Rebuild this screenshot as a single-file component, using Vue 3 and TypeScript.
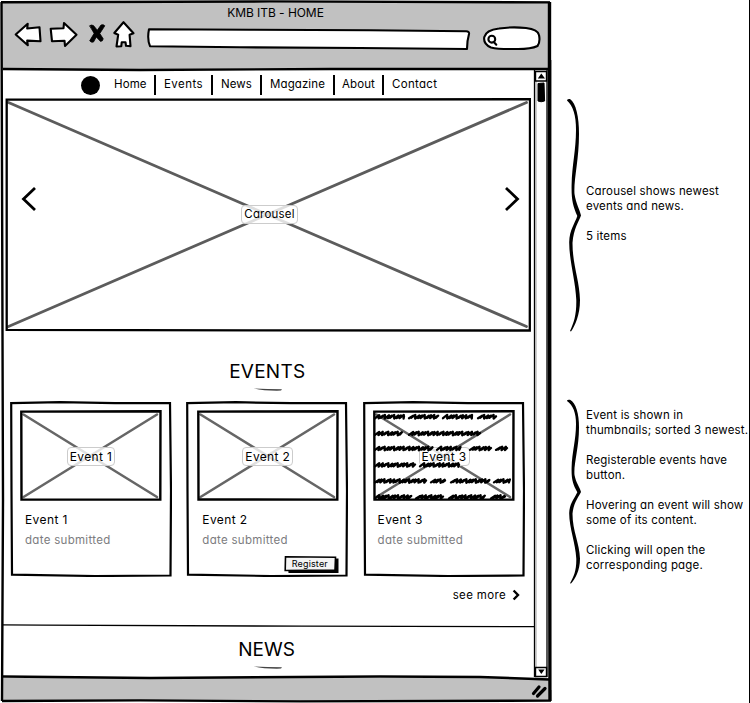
<script setup lang="ts">
interface EventCard {
  title: string
  date: string
  registerable: boolean
  hovered: boolean
}

const navItems: string[] = ['Home', 'Events', 'News', 'Magazine', 'About', 'Contact']

const events: EventCard[] = [
  { title: 'Event 1', date: 'date submitted', registerable: false, hovered: false },
  { title: 'Event 2', date: 'date submitted', registerable: true, hovered: false },
  { title: 'Event 3', date: 'date submitted', registerable: false, hovered: true },
]

const carouselNotes: string[][] = [['Carousel shows newest', 'events and news.'], ['5 items']]

const eventNotes: string[][] = [
  ['Event is shown in', 'thumbnails; sorted 3 newest.'],
  ['Registerable events have', 'button.'],
  ['Hovering an event will show', 'some of its content.'],
  ['Clicking will open the', 'corresponding page.'],
]

// Scribbled words of the hover preview: line height, then [start, end] of each word.
const scribbleRows: { y: number; words: number[][] }[] = [
  { y: 6.8, words: [[2, 31], [36, 64], [70, 98], [105, 123]] },
  { y: 23.5, words: [[2, 28], [36, 107]] },
  { y: 38.5, words: [[2, 59], [64, 87], [97, 118], [123, 134]] },
  { y: 55, words: [[2, 42], [47, 86]] },
  { y: 71, words: [[2, 53], [58, 72], [78, 116], [121, 136]] },
  { y: 87, words: [[2, 37], [43, 70], [76, 111], [118, 132]] },
]

function scribble(y: number, from: number, to: number): string {
  let d = `M${from} ${y + 1.4}`
  let i = 0
  for (let x = from; x < to - 3; i++) {
    const wobble = Math.sin(i * 2.3 + from + y)
    const step = 3.1 + wobble * 1.1
    d += `L${(x + 4.2).toFixed(1)} ${(y - 1.5 - wobble * 0.4).toFixed(1)}L${(x + step).toFixed(1)} ${(y + 1.4 + wobble * 0.4).toFixed(1)}`
    x += step
  }
  return d + `L${to} ${y - 0.5}`
}

const scribblePath: string = scribbleRows
  .map((row) => row.words.map(([a, b]) => scribble(row.y, a, b)).join(''))
  .join('')

const bracePath =
  'M567 100.5Q567 98.5 570 99C576 103 579 117 579 134C579 160 573.5 180 574.5 194C576 204 580 210 581 215.5C579 221 573.5 229 572.5 243C572.5 265 579.5 280 580 300C580 315 575 326 571 331.5L570 331C574 322 576.5 315 576.3 300C575.5 280 569 260 569.2 242C569.5 230 575 223 577.3 216C573 206 571.3 200 571.6 185C572 165 576 150 576 130C576 115 573 106 567 100.5Z'
</script>

<template>
  <div class="page">
    <section class="browser">
      <svg class="frame" viewBox="0 0 552 703" fill="none" stroke="#000">
        <path d="M1.5 2L3 500L2 701" stroke-width="2.4" />
        <path d="M1 2.2L270 1.4L550 2.4" stroke-width="2.4" />
        <path d="M549.5 2L549.3 300L550 701" stroke-width="3.4" />
        <path d="M551.6 60V690" stroke="#777" stroke-width=".8" />
        <path d="M2 701L140 700.4L300 701.4L551 700.6" stroke-width="2.4" />
        <path d="M3 69L140 70L330 69L551 69" stroke-width="2.4" />
        <path d="M3 676.5L150 678L380 676.5L480 677L549 679.5" stroke-width="2.5" />
      </svg>

      <header class="chrome">
        <div class="window-title">KMB ITB - HOME</div>
        <div class="toolbar">
          <svg class="ico-back" viewBox="14 20 30 30">
            <path d="M15.7 34.5L27.7 23.8L27.2 28.5L39.5 27.2L40.5 41.3L27.2 40.6L27.8 45.3Z" />
          </svg>
          <svg class="ico-forward" viewBox="48 20 32 30">
            <path d="M76.5 34.8L64 23L63.5 28.2L50.7 28.7L52 41.2L64.5 40.7L65 46Z" />
          </svg>
          <svg class="ico-stop" viewBox="87 20 20 30">
            <path d="M89.8 25.6Q91.5 24.4 93.5 25.6L97.3 30.2L101 25Q103.5 24 104.8 25.8L99.8 33.5L103.2 38.8Q103 41.3 100.5 41.4L96.3 37L93.5 42Q91 42.8 89.7 40.8L94 33.6Z" />
          </svg>
          <svg class="ico-home" viewBox="111 18 26 32">
            <path d="M123.5 22.2L114.3 33L118.2 34.7L116.5 46.5L121.3 46.2L121.7 42.3L125.5 42.2L126 45.8L130.5 46.2L129.6 34.8L133.5 33.3Z" />
          </svg>
          <svg class="address" viewBox="145 24 328 28">
            <path d="M149 29.3L250 29.7L370 30.2L466 31.3Q469.5 31.2 469 34Q467 41 467 49L360 48L240 47.3L150 46.2Q147 39 149 29.3Z" />
          </svg>
          <svg class="search" viewBox="481 24 62 30">
            <path d="M499 28.5Q512 26.5 526 28Q538 29.5 539 35Q540.5 42 537.5 46Q530 49.5 514 49Q498 49.3 491 47.5Q483 44 484.3 37Q486 30 499 28.5Z" />
            <circle cx="491.8" cy="39.2" r="3.4" />
            <path d="M493.8 42L496.3 44.7" />
          </svg>
        </div>
      </header>

      <div class="viewport">
        <main class="content">
          <nav class="nav">
            <span class="logo"></span>
            <span v-for="item in navItems" :key="item" class="nav-item" :class="item.toLowerCase()">{{ item }}</span>
          </nav>

          <section class="carousel">
            <svg class="sketch" viewBox="0 0 526 234" fill="none">
              <path d="M3.5 4.5L521.5 228.5M521.5 4.5L3.5 228.5" stroke="#5c5c5c" stroke-width="2.8" stroke-linecap="round" />
              <path d="M1.7 1.7L240 1.6L525 1.2L524.8 232.5L260 232.3L1.7 231.8Z" stroke="#000" stroke-width="2.3" />
            </svg>
            <svg class="arrow" viewBox="0 0 16 26"><path d="M14 2L2.5 13L14 24" /></svg>
            <span class="tag">Carousel</span>
            <svg class="arrow" viewBox="0 0 16 26"><path d="M2 2L13.5 13L2 24" /></svg>
          </section>

          <h2 class="heading events-heading">EVENTS</h2>
          <svg class="stroke" viewBox="0 0 30 4"><path d="M1 .4Q14 .9 29 1.2L28 2.6Q12 3 1 .4Z" /></svg>

          <section class="cards">
            <article v-for="event in events" :key="event.title" class="card">
              <svg class="sketch" viewBox="0 0 162 176" fill="none" stroke="#000" stroke-width="2.2">
                <path d="M1.2 2.2L50 1.2L105 2.2L160 2L161 90L160.5 174.5L85 175L2 173.7L1.5 90Z" />
              </svg>
              <div class="thumb">
                <svg class="sketch" viewBox="0 0 142 91" fill="none">
                  <path d="M3.5 4.5L137 87M137 4.5L3.5 87" stroke="#666" stroke-width="2.6" stroke-linecap="round" />
                  <path d="M1.3 1.6L70 1.5L140.5 1.2L140.3 89.6L1.5 89.5Z" stroke="#000" stroke-width="2.4" />
                </svg>
                <span class="tag">{{ event.title }}</span>
                <svg v-if="event.hovered" class="sketch scribbles" viewBox="0 0 142 91">
                  <path :d="scribblePath" />
                </svg>
              </div>
              <h3 class="card-title">{{ event.title }}</h3>
              <p class="card-date">{{ event.date }}</p>
              <button v-if="event.registerable" class="register" type="button">
                <svg class="sketch" viewBox="0 0 56 20">
                  <path d="M3.5 4L54.5 3.5L54.5 18L4.5 18Z" />
                  <path d="M1.5 1.7L51.5 2.2L51 15L1.2 15.5Z" fill="#f4f4f4" stroke="#000" stroke-width="1.6" />
                </svg>
                <span>Register</span>
              </button>
            </article>
          </section>

          <div class="more">
            <span>see more</span>
            <svg viewBox="0 0 8 12"><path d="M1.6 1.5L6 6L1.6 10.5" /></svg>
          </div>

          <svg class="rule" viewBox="0 0 534 4"><path d="M0 .8L40 1.2L300 2.2L533 2.7" /></svg>

          <h2 class="heading news-heading">NEWS</h2>
          <svg class="stroke" viewBox="0 0 30 4"><path d="M1 .4Q14 .9 29 1.2L28 2.6Q12 3 1 .4Z" /></svg>
        </main>

        <svg class="scrollbar" viewBox="533 70 16 608" fill="none" stroke="#000">
          <path d="M534.5 70V677" stroke-width="1.3" />
          <path d="M536 81V667" stroke="#888" stroke-width=".8" />
          <path d="M547 70V677" stroke-width="1.3" />
          <path d="M535.5 71.5H546.5V81H535.5ZM535.5 667.5H546.5V676.5H535.5Z" stroke-width="1.4" />
          <path d="M541.3 73.5L545 78.5H537.8ZM541.3 674L544.6 669.5H538.2Z" fill="#000" stroke="none" />
          <path d="M538 83.5L544 83L544.6 101Q541 102.5 538 101Z" fill="#000" />
        </svg>
      </div>

      <footer class="status">
        <svg viewBox="530 682 18 18"><path d="M533.5 693.5L539 687M537.5 696L545 688.5" /></svg>
      </footer>
    </section>

    <aside class="notes">
      <div class="note note-carousel">
        <svg class="brace" viewBox="566 98 16 234" preserveAspectRatio="none"><path :d="bracePath" /></svg>
        <div class="note-text">
          <p v-for="(para, i) in carouselNotes" :key="i">
            <span v-for="line in para" :key="line">{{ line }}</span>
          </p>
        </div>
      </div>
      <div class="note note-events">
        <svg class="brace" viewBox="566 98 16 234" preserveAspectRatio="none"><path :d="bracePath" /></svg>
        <div class="note-text">
          <p v-for="(para, i) in eventNotes" :key="i">
            <span v-for="line in para" :key="line">{{ line }}</span>
          </p>
        </div>
      </div>
    </aside>
  </div>
</template>

<style>
body {
  margin: 0;
  background: #fff;
}
</style>

<style scoped>
.page {
  display: flex;
  width: 750px;
  height: 703px;
  overflow: hidden;
  box-sizing: border-box;
  border-right: 1px solid #000;
  font-family: Inter, "Liberation Sans", sans-serif;
  font-feature-settings: "cv11";
  font-size: 11.5px;
  line-height: 15px;
  letter-spacing: 0.17px;
  color: #000;
}
svg {
  display: block;
  flex: none;
}
h2,
h3,
p {
  margin: 0;
  font-weight: 400;
}
.browser {
  position: relative;
  display: flex;
  flex-direction: column;
  width: 552px;
  flex: none;
}
.frame {
  position: absolute;
  inset: 0;
  width: 552px;
  height: 703px;
  z-index: 2;
  pointer-events: none;
}
.chrome {
  height: 69px;
  margin: 1px 2px 0 1px;
  background: #c1c1c1;
}
.window-title {
  padding-top: 3.5px;
  text-align: center;
  font-size: 12px;
  line-height: 16px;
  letter-spacing: -0.05px;
}
.toolbar {
  display: flex;
  margin: -2.5px 0 0 13px;
}
.toolbar svg {
  fill: #fff;
  stroke: #000;
  stroke-width: 2.1;
  stroke-linejoin: round;
  stroke-linecap: round;
}
.ico-back { width: 30px; height: 30px; margin-top: 2px; }
.ico-forward { width: 32px; height: 30px; margin: 2px 0 0 4px; }
.toolbar .ico-stop { width: 20px; height: 30px; margin: 2px 0 0 7px; stroke-width: 0.8; fill: #000; }
.ico-home { width: 26px; height: 32px; margin-left: 4px; }
.address { width: 328px; height: 28px; margin: 6px 0 0 8px; }
.search { width: 62px; height: 30px; margin: 6px 0 0 8px; }

.viewport {
  display: flex;
  height: 608px;
}
.content {
  width: 533px;
  flex: none;
}
.scrollbar {
  width: 16px;
  height: 608px;
}
.nav {
  display: flex;
  align-items: center;
  height: 20px;
  padding: 5px 0 3px 81px;
}
.logo {
  width: 19px;
  height: 19px;
  margin-right: 14px;
  border-radius: 50%;
  background: #000;
}
.nav-item {
  box-sizing: border-box;
  height: 20px;
  line-height: 19px;
  letter-spacing: 0.1px;
  white-space: nowrap;
}
.nav-item + .nav-item {
  border-left: 2px solid #000;
  padding-left: 8px;
}
.home { width: 40px; }
.events { width: 57px; letter-spacing: 0.45px; }
.news { width: 49px; }
.magazine { width: 73px; }
.nav-item.about { width: 49px; padding-left: 7px; }
.contact { letter-spacing: 0.3px; }

.sketch {
  position: absolute;
  inset: 0;
  width: 100%;
  height: 100%;
}
.carousel {
  position: relative;
  display: flex;
  justify-content: space-between;
  width: 526px;
  height: 234px;
  box-sizing: border-box;
  margin-left: 5px;
  padding: 0 11.5px 0 15.5px;
}
.arrow {
  width: 16px;
  height: 26px;
  margin-top: 87.5px;
  fill: none;
  stroke: #000;
  stroke-width: 2.8;
}
.tag {
  position: relative;
  box-sizing: border-box;
  height: 19px;
  padding: 0 2px;
  border: 1px solid #ccc;
  border-radius: 4px;
  background: rgba(255, 255, 255, 0.8);
  line-height: 16px;
  white-space: nowrap;
}
.carousel .tag {
  margin: 107px 1px 0 0;
  padding: 0 2.5px;
  letter-spacing: 0.2px;
}
.heading {
  width: 100%;
  text-align: center;
  font-size: 19px;
  line-height: 24px;
  letter-spacing: 0.25px;
}
.events-heading { margin-top: 28px; text-indent: 1.5px; }
.news-heading { margin-top: 10px; letter-spacing: 0; }
.stroke {
  width: 30px;
  height: 4px;
  margin: 4px 0 0 253px;
  fill: #444;
}
.cards {
  display: flex;
  gap: 14.3px;
  margin: 9px 0 0 10px;
}
.card {
  position: relative;
  width: 162px;
  height: 176px;
}
.thumb {
  position: relative;
  display: flex;
  align-items: center;
  justify-content: center;
  width: 142px;
  height: 91px;
  margin: 9px 0 0 10.5px;
}
.card:first-child .thumb {
  margin-left: 10px;
}
.thumb .tag {
  margin-top: 1px;
  font-size: 12px;
  line-height: 17px;
  letter-spacing: 0.35px;
}
.scribbles {
  fill: none;
  stroke: #000;
  stroke-width: 2.3;
  stroke-linejoin: round;
  stroke-linecap: round;
}
.card-title {
  position: relative;
  margin: 10px 0 0 15px;
  font-size: 12px;
  line-height: 18px;
  letter-spacing: 0.4px;
}
.card-date {
  position: relative;
  margin: 2px 0 0 15px;
  line-height: 18px;
  letter-spacing: 0.3px;
  color: #7c7c80;
}
.card:nth-child(2) .card-title,
.card:nth-child(2) .card-date {
  margin-left: 16px;
}
.register {
  position: relative;
  display: block;
  width: 56px;
  height: 20px;
  margin: 6px 0 0 98px;
  padding: 0 5px 3px 0;
  border: 0;
  background: none;
  font: inherit;
  font-size: 9px;
  line-height: 16px;
  letter-spacing: 0.15px;
  color: #000;
}
.register span {
  position: relative;
}
.more {
  display: flex;
  align-items: center;
  justify-content: flex-end;
  gap: 6px;
  margin: 10px 13px 0 0;
  line-height: 16px;
  letter-spacing: 0.35px;
}
.more svg {
  width: 8px;
  height: 12px;
  fill: none;
  stroke: #000;
  stroke-width: 2.4;
}
.rule {
  width: 534px;
  height: 4px;
  margin: 21px 0 0 2px;
  fill: none;
  stroke: #000;
  stroke-width: 1.3;
}
.status {
  display: flex;
  justify-content: flex-end;
  height: 23px;
  margin: 0 2px 0 2px;
  background: #c1c1c1;
}
.status svg {
  width: 18px;
  height: 18px;
  margin: 4px 2px 0 0;
  fill: none;
  stroke: #000;
  stroke-width: 3.2;
  stroke-linecap: round;
}
.notes {
  padding: 98px 0 0 14px;
}
.note {
  display: flex;
  gap: 4px;
}
.brace {
  width: 16px;
}
.note-carousel .brace { height: 234px; }
.note-events .brace { height: 185px; }
.note-carousel .note-text { padding-top: 86px; }
.note-events .note-text { padding-top: 9px; }
.note-events { margin-top: 67px; }
.note-text p + p {
  margin-top: 15px;
}
.note-text span {
  display: block;
  white-space: nowrap;
}
</style>
